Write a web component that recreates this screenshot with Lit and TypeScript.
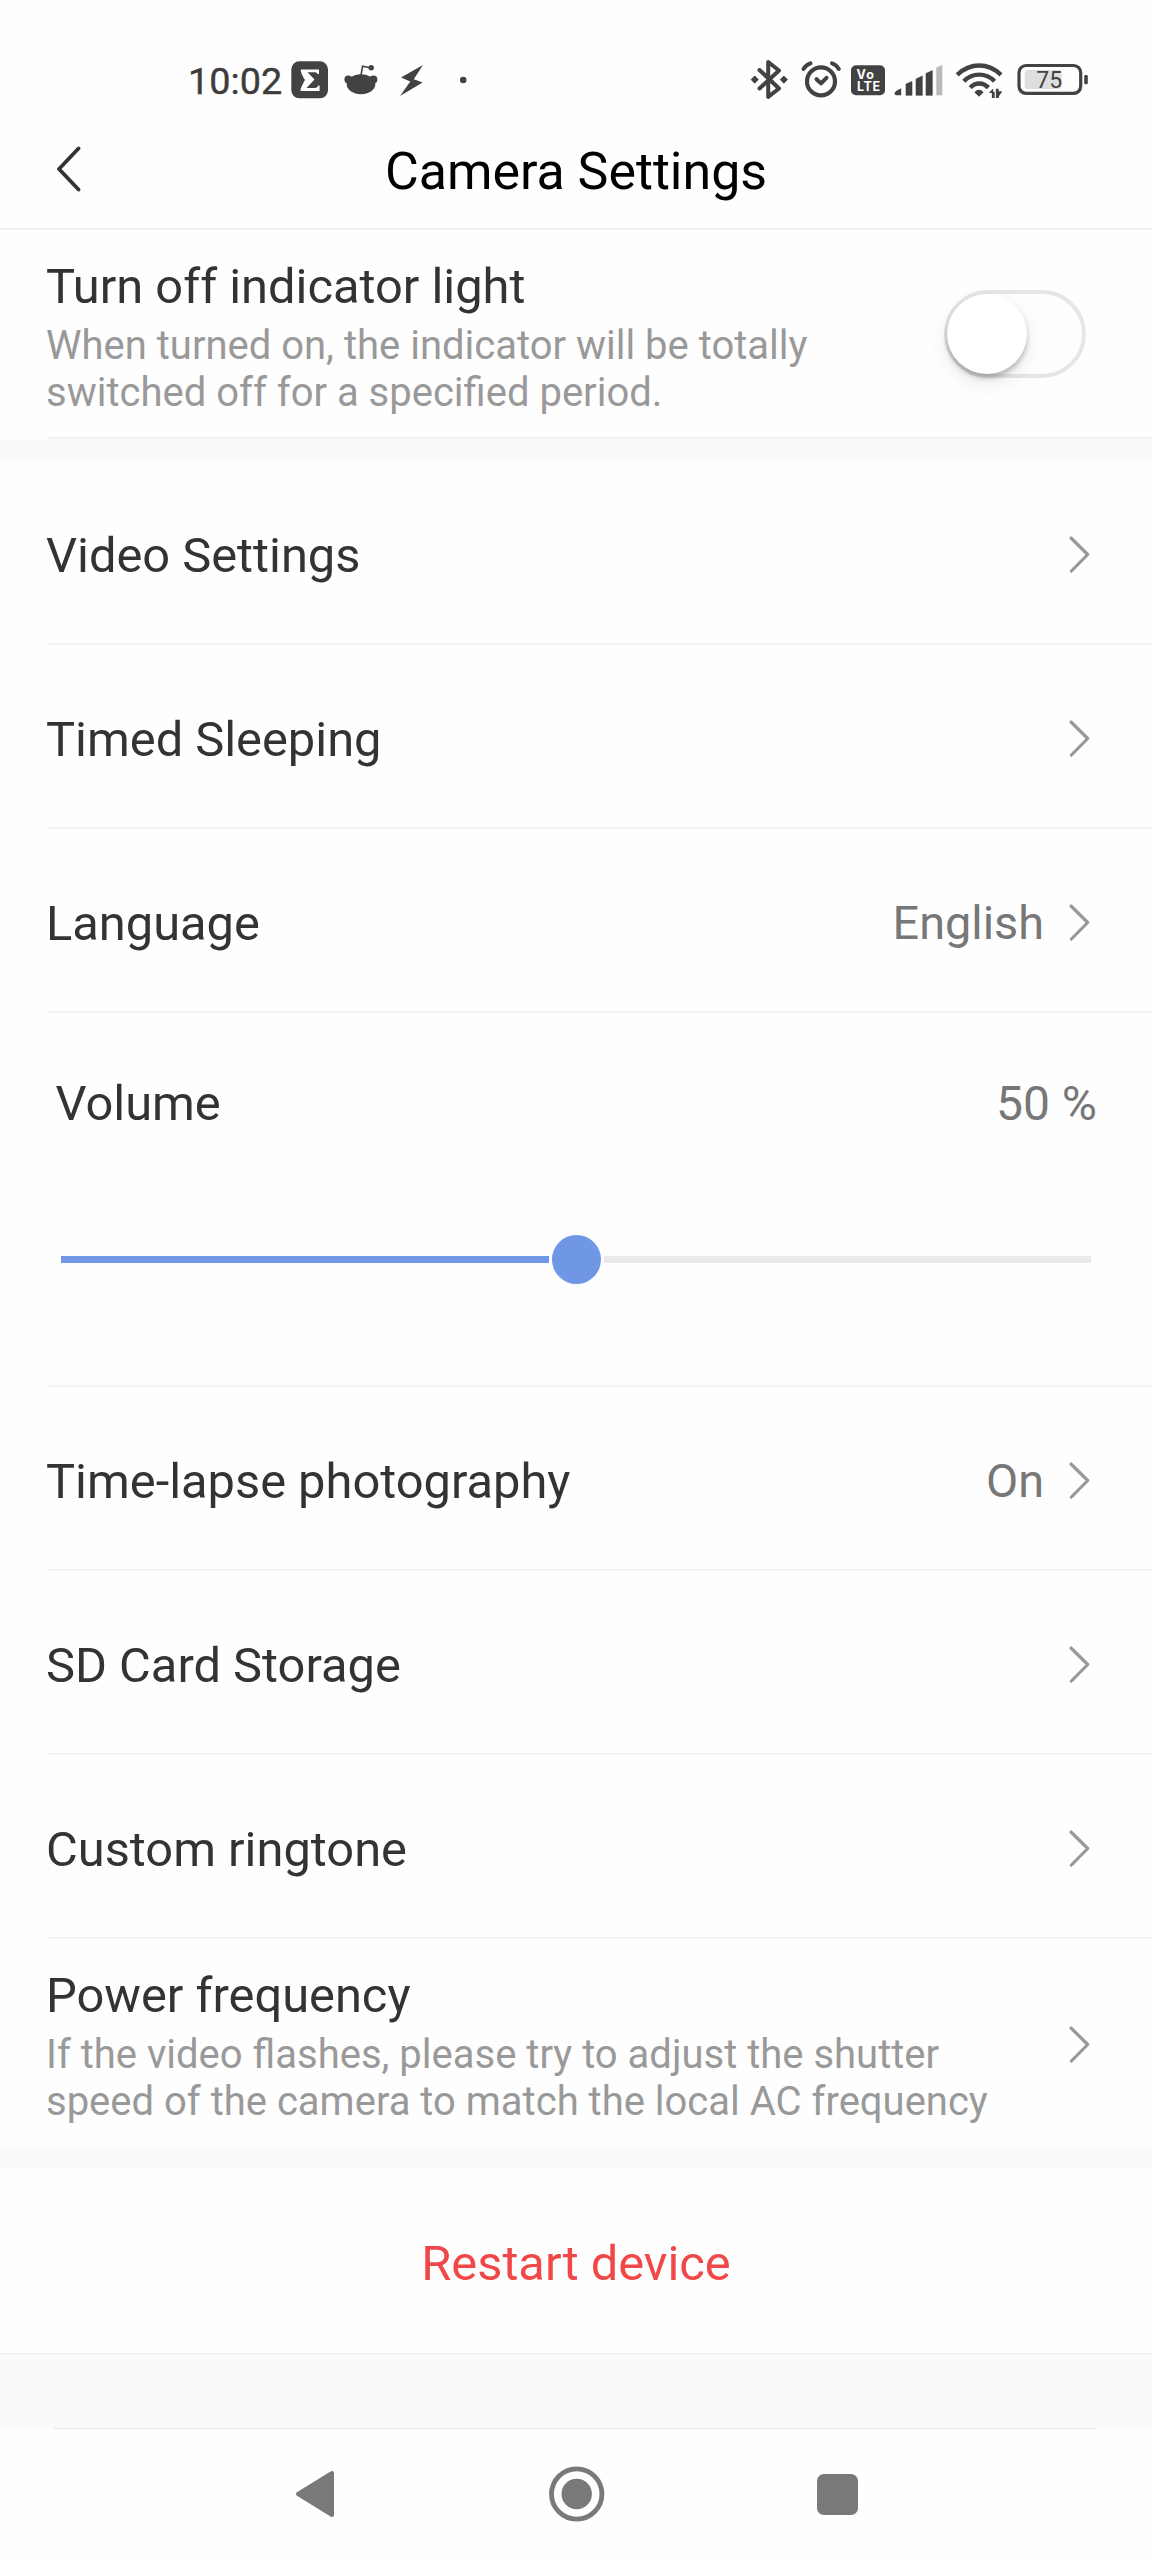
import { LitElement, html, css, svg, nothing } from "lit";
import { customElement, property } from "lit/decorators.js";

@customElement("status-bar")
class StatusBar extends LitElement {
  static styles = css`
    :host {
      display: flex;
      justify-content: space-between;
      box-sizing: border-box;
      height: 120px;
      padding: 40px 60px 0 188px;
      color: #3c3c3c;
    }
    .side {
      display: flex;
      align-items: center;
      height: 80px;
    }
    .time {
      font-size: 37.8px;
      font-weight: 400;
      line-height: 44px;
      width: 100px;
      padding-top: 2px;
      -webkit-text-stroke: 0.4px #3c3c3c;
    }
    svg {
      display: block;
      flex: none;
      overflow: visible;
    }
    .small {
      font: 700 12.5px Inter, Roboto, sans-serif;
    }
    .pct {
      font: 400 23px Roboto, sans-serif;
    }
  `;
  render() {
    return html`
      <div class="side">
        <span class="time">10:02</span>
        <svg width="212" height="80" viewBox="288 40 212 80" fill="#424242">
          <rect x="291.3" y="61.3" width="36.7" height="37" rx="8" />
          <path d="M300.8 69.5H319V74H317.6C317 72.8 316 72.2 314 72.2H307.5L314.5 79.6L306.5 88H315C317 88 317.8 87 318.2 85.6H319.6V91H300.6V89C302.5 84 303.5 82.5 305 79.9C303 77 301.5 74 300.8 71Z" fill="#fefefe" />
          <ellipse cx="361" cy="84.3" rx="14.3" ry="10" />
          <circle cx="348.4" cy="79.5" r="4" />
          <circle cx="373.4" cy="79.5" r="4" />
          <path d="M361 75L362.6 66.2L370 67.8" fill="none" stroke="#424242" stroke-width="1.6" />
          <circle cx="371.2" cy="67.7" r="2.7" />
          <path d="M423 65L401 77.4L410.3 81.4L400 96L422.6 82.4L413.8 79.2Z" />
          <circle cx="463.2" cy="80" r="3.3" />
        </svg>
      </div>
      <div class="side">
        <svg width="344" height="80" viewBox="748 40 344 80" fill="#424242">
          <g fill="none" stroke="#424242" stroke-width="4" stroke-linecap="round" stroke-linejoin="round">
            <path d="M759.5 70L779 88.5L768.2 96.8V62L779 70.5L759.5 88.5" />
            <circle cx="821" cy="81.4" r="14" stroke-width="4.2" />
            <path d="M816.5 79.2L821 83.4L826.5 77.8" />
            <path d="M803.5 69Q806 64.8 810.5 63.3M838.8 69Q836.5 64.8 832 63.3" />
          </g>
          <path d="M754.7 76L758.2 79.6L754.7 83.2L751.2 79.6Z M783.8 76L787.3 79.6L783.8 83.2L780.3 79.6Z" stroke="#424242" stroke-width="1" stroke-linejoin="round" />
          <rect x="851" y="65.3" width="34" height="30" rx="5" />
          <g fill="#fefefe" class="small">
            <text x="856.5" y="78.5" textLength="17.5">Vo</text>
            <text x="857" y="91.3" textLength="23">LTE</text>
          </g>
          <path d="M894.5 93Q894.5 91.5 901.2 88.2V95.3H896.5Q894.5 95.3 894.5 93Z" />
          <path d="M906 84L912 81.5V95.3H906Z M916 79L922.3 76V95.3H916Z M926 73.5L932.3 70.5V95.3H926Z" stroke="#424242" stroke-width=".6" stroke-linejoin="round" />
          <path d="M936.3 67.5L942.3 65V95.3H936.3Z" fill="#b9b9b9" />
          <g fill="none" stroke="#424242" stroke-width="4.4">
            <path d="M957.2 74.8Q967 65.5 979.2 65.5T1001 74.8" />
            <path d="M963.8 81.2Q970.5 74.6 979.2 74.6T994.6 81.2" />
            <path d="M970.3 87.6Q974 83.5 979.2 83.5T988.4 87.6" />
          </g>
          <path d="M974.4 92.2Q979 87.4 983.6 92.2L979 96.8Z" />
          <path d="M989.5 92.3H994V97.3H992.5V89.2 M1001.7 92H998.3V97.4 M998 89.3V97.4H996.5V89.3Z" stroke="#424242" stroke-width="1.3" />
          <rect x="1019" y="65.5" width="61.7" height="27.8" rx="7" fill="none" stroke="#424242" stroke-width="3.2" />
          <rect x="1024.7" y="70" width="37" height="19" rx="3.5" fill="#dedede" />
          <rect x="1084.2" y="75" width="3.6" height="9.2" rx="1.2" />
          <text x="1049.2" y="88.3" text-anchor="middle" class="pct">75</text>
        </svg>
      </div>
    `;
  }
}

const chevron = svg`<path d="M2 2L18.7 18.5L2.4 35" fill="none" stroke="#999" stroke-width="3.2" stroke-linecap="round" stroke-linejoin="round"/>`;

@customElement("setting-row")
class SettingRow extends LitElement {
  @property() label = "";
  @property() value = "";
  @property() note = "";
  @property() control = "chevron";
  @property({ type: Boolean }) last = false;

  static styles = css`
    :host {
      display: block;
    }
    .row {
      display: flex;
      align-items: center;
      box-sizing: border-box;
      height: 184px;
      padding: 3px 62px 0 46px;
    }
    .tall {
      height: 209px;
      padding-top: 0;
    }
    .tall.last {
      height: 208px;
      padding-top: 2px;
    }
    .line {
      height: 2px;
      margin: -2px 0 0 48px;
      background: #f1f1f1;
    }
    .text {
      flex: 1;
    }
    .label {
      font-size: 48.8px;
      line-height: 57px;
      color: #333;
      padding-top: 1px;
    }
    .tall .text {
      align-self: flex-start;
      padding-top: 27px;
    }
    .tall.last .text {
      padding-top: 25px;
    }
    .note {
      margin-top: 8px;
      font-size: 40px;
      line-height: 46.5px;
      color: #999;
      white-space: pre-line;
    }
    .value {
      font-size: 46.8px;
      line-height: 56px;
      color: #777;
      margin-right: 25px;
    }
    .toggle {
      box-sizing: border-box;
      width: 142px;
      height: 88px;
      margin: 0 4px 2px 0;
      border: 4px solid #e5e5ea;
      border-radius: 44px;
    }
    .knob {
      width: 80px;
      height: 80px;
      margin-left: -1px;
      border-radius: 50%;
      background: #fff;
      box-shadow: 0 4px 5px rgba(0, 0, 0, 0.24), 0 8px 22px rgba(0, 0, 0, 0.09);
    }
  `;
  render() {
    return html`
      <div class="row ${this.note ? "tall" : ""} ${this.last ? "last" : ""}">
        <div class="text">
          <div class="label">${this.label}</div>
          ${this.note ? html`<div class="note">${this.note}</div>` : nothing}
        </div>
        ${this.value ? html`<div class="value">${this.value}</div>` : nothing}
        ${this.control === "toggle"
          ? html`<div class="toggle"><div class="knob"></div></div>`
          : html`<svg width="21" height="37" viewBox="0 0 21 37">${chevron}</svg>`}
      </div>
      ${this.last ? nothing : html`<div class="line"></div>`}
    `;
  }
}

@customElement("volume-row")
class VolumeRow extends LitElement {
  @property({ type: Number }) level = 50;

  static styles = css`
    :host {
      display: block;
      box-sizing: border-box;
      height: 374px;
      padding-top: 62px;
    }
    .head {
      display: flex;
      justify-content: space-between;
      padding: 0 55px 0 55.5px;
      font-size: 48.8px;
      line-height: 57px;
      color: #333;
    }
    .value {
      font-size: 48px;
      color: #777;
    }
    .slider {
      display: flex;
      align-items: center;
      height: 50px;
      margin: 102px 61px 0;
    }
    .fill,
    .rest {
      height: 7px;
      background: #7096e6;
    }
    .rest {
      flex: 1;
      background: #e8eaeb;
    }
    .thumb {
      flex: none;
      width: 49px;
      height: 49px;
      margin: 0 3px;
      border-radius: 50%;
      background: #7096e6;
    }
    .line {
      height: 2px;
      margin: 101px 0 0 48px;
      background: #f3f3f3;
    }
  `;
  render() {
    return html`
      <div class="head"><span>Volume</span><span class="value">${this.level} %</span></div>
      <div class="slider">
        <div class="fill" style="width: calc((100% - 55px) * ${this.level / 100})"></div>
        <div class="thumb"></div>
        <div class="rest"></div>
      </div>
      <div class="line"></div>
    `;
  }
}

@customElement("app-root")
class AppRoot extends LitElement {
  static styles = css`
    :host {
      display: flex;
      flex-direction: column;
      width: 1152px;
      height: 2560px;
      overflow: hidden;
      background: #fefefe;
      font-family: Roboto, "Liberation Sans", sans-serif;
    }
    .header {
      display: grid;
      grid-template-columns: 96px 1fr 96px;
      align-items: center;
      box-sizing: border-box;
      height: 110px;
      padding-bottom: 10px;
      border-bottom: 2px solid #f1f1f1;
    }
    .back {
      display: block;
      margin-left: 55px;
    }
    .title {
      text-align: center;
      font-size: 51.9px;
      line-height: 61px;
      padding-top: 4px;
      color: #000;
    }
    .band {
      height: 22px;
      background: #f8fafc;
    }
    .restart {
      height: 184px;
      box-sizing: border-box;
      padding-top: 3px;
      line-height: 184px;
      text-align: center;
      font-size: 48.8px;
      color: #f04848;
      overflow: hidden;
    }
    .filler {
      box-sizing: border-box;
      height: 76px;
      padding: 73px 55px 0 54px;
      background: linear-gradient(#f8fafc 73px, #fefefe 73px);
      border-top: 2px solid #f0f1f3;
    }
    .edge {
      height: 1px;
      background: #e2e6ea;
    }
    .nav {
      display: flex;
      justify-content: space-between;
      align-items: center;
      height: 130px;
      padding: 0 294px 0 295px;
    }
  `;
  render() {
    return html`
      <status-bar></status-bar>
      <div class="header">
        <svg class="back" width="26" height="46" viewBox="0 0 26 46">
          <path d="M23.5 2.5L4 23L23.5 43.5" fill="none" stroke="#333" stroke-width="3.8" stroke-linecap="round" stroke-linejoin="round" />
        </svg>
        <div class="title">Camera Settings</div>
      </div>
      <setting-row
        label="Turn off indicator light"
        note=${"When turned on, the indicator will be totally\nswitched off for a specified period."}
        control="toggle"
      ></setting-row>
      <div class="band"></div>
      <setting-row label="Video Settings"></setting-row>
      <setting-row label="Timed Sleeping"></setting-row>
      <setting-row label="Language" value="English"></setting-row>
      <volume-row level="50"></volume-row>
      <setting-row label="Time-lapse photography" value="On"></setting-row>
      <setting-row label="SD Card Storage"></setting-row>
      <setting-row label="Custom ringtone"></setting-row>
      <setting-row
        label="Power frequency"
        note=${"If the video flashes, please try to adjust the shutter\nspeed of the camera to match the local AC frequency"}
        last
      ></setting-row>
      <div class="band"></div>
      <div class="restart">Restart device</div>
      <div class="filler"><div class="edge"></div></div>
      <div class="nav">
        <svg width="41" height="48" viewBox="0 0 41 48" fill="#797979">
          <path d="M3 24L37 3V45Z" stroke="#797979" stroke-width="4" stroke-linejoin="round" />
        </svg>
        <svg width="56" height="56" viewBox="0 0 56 56">
          <circle cx="27.7" cy="28" r="25.2" fill="none" stroke="#797979" stroke-width="4.8" />
          <circle cx="27.7" cy="28" r="15.2" fill="#797979" />
        </svg>
        <svg width="41" height="41" viewBox="0 0 41 41"><rect width="41" height="41" rx="7" fill="#797979" /></svg>
      </div>
    `;
  }
}
